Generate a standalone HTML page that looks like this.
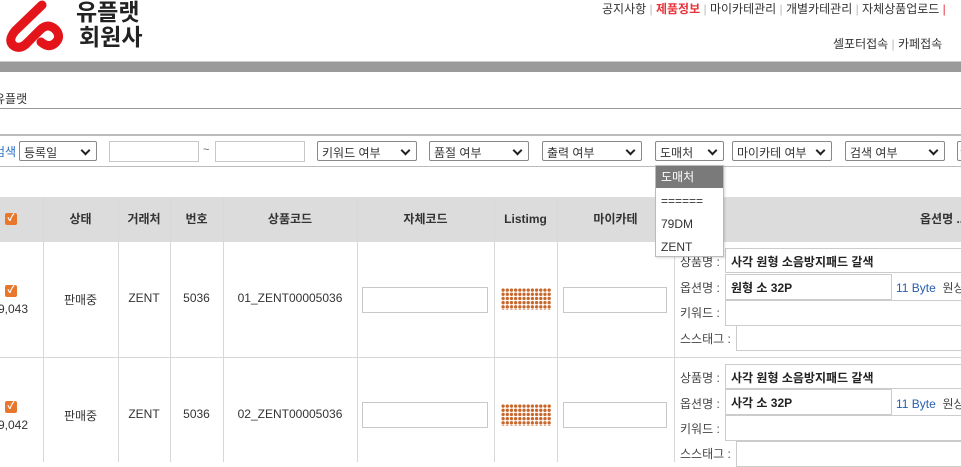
<!DOCTYPE html>
<html><head><meta charset="utf-8">
<style>
*{box-sizing:border-box;margin:0;padding:0}
body{width:961px;height:462px;overflow:hidden;background:#fff;font-family:"Liberation Sans","Noto Sans CJK KR",sans-serif;font-size:12px;color:#333;position:relative}
.a{position:absolute;white-space:nowrap}
.sel{position:absolute;height:20px;border:1px solid #888;border-radius:2px;background:#fff;font-size:12px;padding:2px 4px;color:#333}
.sel:after{content:"";position:absolute;right:7px;top:5px;width:5px;height:5px;border-right:2px solid #222;border-bottom:2px solid #222;transform:rotate(45deg)}
.inp{position:absolute;border:1px solid #c8c8c8;background:#fff}
.hd{position:absolute;top:197px;height:45px;line-height:45px;text-align:center;font-weight:bold;font-size:12px;color:#333}
.vl{position:absolute;width:1px;background:#d8d8d8}
.cb{position:absolute;width:12px;height:12px;background:#e8772e;border-radius:2px;color:#fff;font-size:10px;line-height:12px;text-align:center;font-weight:bold}
.c{position:absolute;text-align:center;font-size:12px;color:#333}
.lb{position:absolute;font-size:12px;color:#444}
.tx{position:absolute;border:1px solid #ccc;background:#fff;font-size:12px;font-weight:bold;padding:4px 5px;color:#222}
.img{position:absolute;width:50px;height:22px;background-image:radial-gradient(circle,#c8662a 1.6px,transparent 1.8px);background-size:4.2px 4.2px}
</style></head><body>
<!-- logo -->
<svg class="a" style="left:0;top:0" width="72" height="54" viewBox="0 0 72 54">
<path d="M42 5 L15 31 Q7 41 14 46 Q21 50 28 42 L40 30 Q48 22 56 30 Q62 38 54 44 Q48 48 41 42" fill="none" stroke="#e4141b" stroke-width="9" stroke-linecap="round" stroke-linejoin="round"/>
</svg>
<div class="a" style="left:76px;top:0px;font-size:23px;font-weight:bold;color:#222;line-height:25px">유플랫</div>
<div class="a" style="left:79px;top:25px;font-size:23px;font-weight:bold;color:#222;line-height:25px">회원사</div>
<div class="a" style="left:602px;top:0px;font-size:12px;color:#333">공지사항 <span style="color:#bbb">|</span> <b style="color:#e8333a">제품정보</b> <span style="color:#bbb">|</span> 마이카테관리 <span style="color:#bbb">|</span> 개별카테관리 <span style="color:#bbb">|</span> 자체상품업로드 <span style="color:#e8333a">|</span></div>
<div class="a" style="left:833px;top:35px;font-size:12px;color:#333">셀포터접속 <span style="color:#bbb">|</span> 카페접속</div>
<div class="a" style="left:0;top:61px;width:961px;height:1px;background:#ccc"></div>
<div class="a" style="left:0;top:62px;width:961px;height:10px;background:#9a9a9a"></div>
<div class="a" style="left:-6px;top:90px;font-size:12px;color:#333">유플랫</div>
<div class="a" style="left:0;top:108px;width:961px;height:1px;background:#999"></div>
<div class="a" style="left:0;top:134px;width:961px;height:2px;background:#bbb"></div>
<div class="a" style="left:-6px;top:143px;color:#2a6fc0;font-size:12px">검색</div>
<div class="sel" style="left:19px;top:141px;width:78px">등록일</div>
<div class="inp" style="left:109px;top:141px;width:90px;height:21px"></div>
<div class="a" style="left:203px;top:144px;font-size:11px;color:#666">~</div>
<div class="inp" style="left:215px;top:141px;width:90px;height:21px"></div>
<div class="sel" style="left:317px;top:141px;width:100px">키워드 여부</div>
<div class="sel" style="left:429px;top:141px;width:100px">품절 여부</div>
<div class="sel" style="left:542px;top:141px;width:100px">출력 여부</div>
<div class="sel" style="left:655px;top:141px;width:69px">도매처</div>
<div class="sel" style="left:732px;top:141px;width:100px">마이카테 여부</div>
<div class="sel" style="left:845px;top:141px;width:100px">검색 여부</div>
<div class="sel" style="left:957px;top:141px;width:20px"></div>
<div class="a" style="left:0;top:166px;width:961px;height:1px;background:#bbb"></div>
<!-- table header -->
<div class="a" style="left:0;top:197px;width:961px;height:45px;background:#dcdcdc"></div>
<div class="cb" style="left:5px;top:213px">✓</div>
<div class="hd" style="left:43px;width:75px">상태</div>
<div class="hd" style="left:118px;width:52px">거래처</div>
<div class="hd" style="left:170px;width:53px">번호</div>
<div class="hd" style="left:223px;width:134px">상품코드</div>
<div class="hd" style="left:357px;width:137px">자체코드</div>
<div class="hd" style="left:494px;width:63px">Listimg</div>
<div class="hd" style="left:557px;width:117px">마이카테</div>
<div class="hd" style="left:920px;width:80px;text-align:left">옵션명 ..</div>
<div class="vl" style="left:43px;top:197px;height:265px"></div>
<div class="vl" style="left:118px;top:197px;height:265px"></div>
<div class="vl" style="left:170px;top:197px;height:265px"></div>
<div class="vl" style="left:223px;top:197px;height:265px"></div>
<div class="vl" style="left:357px;top:197px;height:265px"></div>
<div class="vl" style="left:494px;top:197px;height:265px"></div>
<div class="vl" style="left:557px;top:197px;height:265px"></div>
<div class="vl" style="left:674px;top:197px;height:265px"></div>
<div class="a" style="left:0;top:357px;width:961px;height:1px;background:#d8d8d8"></div>
<!-- row 1 -->
<div class="cb" style="left:5px;top:285px">✓</div>
<div class="a" style="left:-2px;top:302px">9,043</div>
<div class="c" style="left:43px;width:75px;top:291px">판매중</div>
<div class="c" style="left:118px;width:52px;top:291px">ZENT</div>
<div class="c" style="left:170px;width:53px;top:291px">5036</div>
<div class="c" style="left:223px;width:134px;top:291px">01_ZENT00005036</div>
<div class="inp" style="left:362px;top:287px;width:126px;height:26px"></div>
<div class="img" style="left:501px;top:288px"></div>
<div class="inp" style="left:563px;top:287px;width:104px;height:26px"></div>
<div class="lb" style="left:680px;top:253px">상품명 :</div>
<div class="tx" style="left:725px;top:248px;width:240px;height:25px">사각 원형 소음방지패드 갈색</div>
<div class="lb" style="left:680px;top:279px">옵션명 :</div>
<div class="tx" style="left:725px;top:274px;width:167px;height:26px">원형 소 32P</div>
<div class="a" style="left:896px;top:279px;color:#2a5db0">11 Byte <span style="color:#444">&nbsp;원상</span></div>
<div class="lb" style="left:680px;top:304px">키워드 :</div>
<div class="tx" style="left:725px;top:300px;width:240px;height:26px"></div>
<div class="lb" style="left:680px;top:330px">스스태그 :</div>
<div class="tx" style="left:736px;top:325px;width:230px;height:26px"></div>
<!-- row 2 -->
<div class="cb" style="left:5px;top:401px">✓</div>
<div class="a" style="left:-2px;top:418px">9,042</div>
<div class="c" style="left:43px;width:75px;top:407px">판매중</div>
<div class="c" style="left:118px;width:52px;top:407px">ZENT</div>
<div class="c" style="left:170px;width:53px;top:407px">5036</div>
<div class="c" style="left:223px;width:134px;top:407px">02_ZENT00005036</div>
<div class="inp" style="left:362px;top:402px;width:126px;height:26px"></div>
<div class="img" style="left:501px;top:404px"></div>
<div class="inp" style="left:563px;top:402px;width:104px;height:26px"></div>
<div class="lb" style="left:680px;top:369px">상품명 :</div>
<div class="tx" style="left:725px;top:364px;width:240px;height:25px">사각 원형 소음방지패드 갈색</div>
<div class="lb" style="left:680px;top:395px">옵션명 :</div>
<div class="tx" style="left:725px;top:389px;width:167px;height:26px">사각 소 32P</div>
<div class="a" style="left:896px;top:395px;color:#2a5db0">11 Byte <span style="color:#444">&nbsp;원상</span></div>
<div class="lb" style="left:680px;top:420px">키워드 :</div>
<div class="tx" style="left:725px;top:415px;width:240px;height:26px"></div>
<div class="lb" style="left:680px;top:445px">스스태그 :</div>
<div class="tx" style="left:736px;top:441px;width:230px;height:26px"></div>
<!-- dropdown list -->
<div class="a" style="left:655px;top:165px;width:69px;height:92px;background:#fff;border:1px solid #bbb;box-shadow:1px 1px 2px rgba(0,0,0,.15)">
<div style="background:#7a7a7a;color:#fff;height:22px;line-height:22px;padding-left:5px;font-size:12px">도매처</div>
<div style="height:23px;line-height:23px;padding-left:5px;font-size:12px;color:#333;margin-top:2px">======</div>
<div style="height:23px;line-height:23px;padding-left:5px;font-size:12px;color:#333">79DM</div>
<div style="height:22px;line-height:22px;padding-left:5px;font-size:12px;color:#333">ZENT</div>
</div>
</body></html>
